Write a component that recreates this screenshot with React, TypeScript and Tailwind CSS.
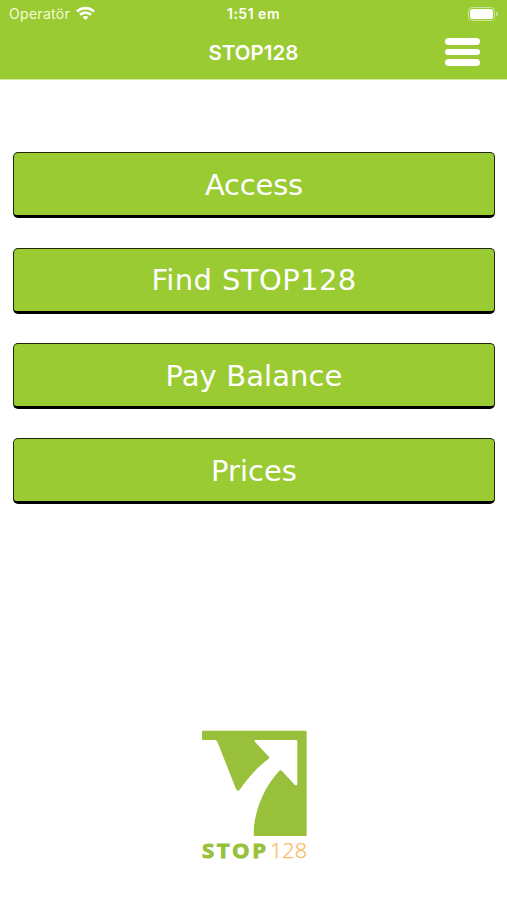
const items = [
  { label: 'Access', text: 'tracking-[-0.2px]' },
  { label: 'Find STOP128', text: 'tracking-[0.4px]' },
  { label: 'Pay Balance', text: 'tracking-[0.1px]' },
  { label: 'Prices', text: 'tracking-[0px]' },
];

function StatusBar() {
  return (
    <div className="grid h-[27px] grid-cols-3 items-center px-[9px] text-[14px] leading-[27px] text-white">
      <div className="flex items-center gap-[6px]">
        <span className="w-[61px] tracking-[0.3px] text-[#f3fbd9]">Operatör</span>
        <svg width="19" height="15" viewBox="0 0 18 14" fill="none" stroke="white" strokeWidth="2.6">
          <path d="M0.9 5.1C5.4 0.8 12.6 0.8 17.1 5.1" />
          <path d="M3.8 8.2C6.7 5.4 11.3 5.4 14.2 8.2" />
          <path d="M6.2 10.4C7.8 9 10.2 9 11.8 10.4L9 13.2Z" fill="white" stroke="none" />
        </svg>
      </div>
      <span className="text-center font-semibold tracking-[0.5px]">1:51 em</span>
      <div className="flex items-center justify-end gap-[1px]">
        <div className="h-[14px] w-[27px] rounded-[4px] border border-[#cce596] p-[1px]">
          <div className="h-full rounded-[2.5px] bg-white" />
        </div>
        <div className="h-1 w-[2px] rounded-r-full bg-[#cce596]" />
      </div>
    </div>
  );
}

function Logo() {
  return (
    <svg width="130" height="150" viewBox="0 0 390 450" className="block">
      <path
        fill="#98c03a"
        d="M39 32H346Q350 32 350 36V344Q350 348 346 348H195Q191 348 191 344C191 272 223 200 268 152Q271 149 275 152L314 194Q322 199 322 190V64Q322 60 318 60H199Q190 61 196 67L237 111Q239 114 235 117C202 141 174 174 149 209Q143 216 138 207L82 65Q80 60 74 60H39Q36 60 36 56V36Q36 32 39 32Z"
      />
      <text x="36" y="414" fill="#98c03a" stroke="#98c03a" strokeWidth="2.5" fontFamily="Open Sans, sans-serif" fontWeight="700" fontSize="61" textLength="200" lengthAdjust="spacingAndGlyphs" letterSpacing="7">STOP</text>
      <text x="240" y="414" fill="#f8bd66" stroke="#f8bd66" strokeWidth="1" fontFamily="Open Sans, sans-serif" fontWeight="300" fontSize="61" textLength="111" lengthAdjust="spacingAndGlyphs">128</text>
    </svg>
  );
}

export default function App() {
  return (
    <div className="flex h-[900px] w-[507px] flex-col overflow-hidden bg-white font-['Inter',sans-serif]">
      <header className="h-[80px] shrink-0 border-b border-[#d5eaaa] bg-[#9acb32]">
        <StatusBar />
        <div className="grid h-[50px] grid-cols-[1fr_auto_1fr] items-center px-[27px]">
          <span />
          <h1 className="pt-[2px] text-[20.5px] font-semibold tracking-[0px] text-white">STOP128</h1>
          <button aria-label="Menu" className="flex flex-col gap-[4px] justify-self-end">
            <span className="h-[6.5px] w-[35px] rounded-full bg-white" />
            <span className="h-[6.5px] w-[35px] rounded-full bg-white" />
            <span className="h-[6.5px] w-[35px] rounded-full bg-white" />
          </button>
        </div>
      </header>
      <main className="flex flex-1 flex-col items-center">
        <nav className="flex w-full flex-col gap-[29.4px] pt-[72.3px] pr-[12px] pl-[13px]">
          {items.map((item) => (
            <button
              key={item.label}
              className="flex h-[66px] items-center justify-center rounded-[5px] border-[1.5px] border-b-[3.5px] border-[#20280c] border-b-black bg-[#9acb32] pt-[3px] font-['DejaVu_Sans',sans-serif] text-[29px] text-white"
            >
              <span className={item.text}>{item.label}</span>
            </button>
          ))}
        </nav>
        <div className="mt-auto mb-[30px] pl-[2px]">
          <Logo />
        </div>
      </main>
    </div>
  );
}
